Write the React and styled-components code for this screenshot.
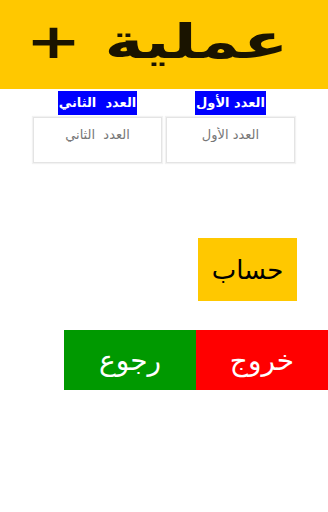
import React from 'react';
import styled, { createGlobalStyle } from 'styled-components';

const VARS = {
  yellow: '#ffc800',
  blue: '#0000ff',
  green: '#009900',
  red: '#ff0000',
  arabic: '"DejaVu Sans", "Noto Sans", sans-serif',
};

const GlobalStyle = createGlobalStyle`
  html, body {
    margin: 0;
    padding: 0;
    background: #fff;
  }
  body {
    font-family: ${VARS.arabic};
  }
`;

const Page = styled.div`
  direction: rtl;
  width: 328px;
  height: 512px;
  display: flex;
  flex-direction: column;
`;

const Header = styled.header`
  height: 89px;
  background-color: ${VARS.yellow};
  display: flex;
  align-items: center;
  justify-content: center;

  h1 {
    margin: 0 14px 8px 0;
    font-size: 48px;
    font-weight: 700;
    color: #1a1400;
    white-space: pre;
    line-height: 1;
    transform: scaleX(1.38);
  }
`;

const Fields = styled.div`
  display: flex;
  justify-content: center;
  gap: 4px;
  margin-top: 2px;
`;

const Field = styled.div`
  width: 129px;
  display: flex;
  flex-direction: column;
  align-items: center;
  gap: 2px;
`;

const Label = styled.span`
  background-color: ${VARS.blue};
  color: #fff;
  font-weight: 700;
  font-size: 13px;
  line-height: 24px;
  height: 24px;
  padding: 0 1px;
  white-space: pre;
`;

const Input = styled.input`
  box-sizing: border-box;
  width: 129px;
  height: 46px;
  border: 1px solid #e4e4e4;
  box-shadow: 0 0 1px 1px #f2f2f2;
  padding: 0 0 12px;
  text-align: center;
  font-family: ${VARS.arabic};
  font-size: 13px;
  color: #333;
  direction: rtl;

  &::placeholder {
    color: #777;
  }
`;

const ActionRow = styled.div`
  display: flex;
  justify-content: flex-start;
  padding-right: 31px;
  margin-top: 75px;
`;

const Button = styled.button`
  border: none;
  margin: 0;
  padding: 0;
  font-family: ${VARS.arabic};
  font-size: ${p => p.$size || 28}px;
  background-color: ${p => p.$bg};
  color: ${p => p.$fg || '#fff'};
  width: ${p => p.$w}px;
  height: ${p => p.$h}px;
  cursor: pointer;
`;

const NavRow = styled.div`
  display: flex;
  margin-top: 29px;
`;

export default function App() {
  return (
    <Page>
      <GlobalStyle />
      <Header>
        <h1>{'عملية +'}</h1>
      </Header>

      <Fields>
        <Field>
          <Label>العدد الأول</Label>
          <Input placeholder="العدد الأول" />
        </Field>
        <Field>
          <Label>{'العدد  الثاني'}</Label>
          <Input placeholder="العدد  الثاني" />
        </Field>
      </Fields>

      <ActionRow>
        <Button $bg={VARS.yellow} $fg="#000" $w={99} $h={63} $size={26}>حساب</Button>
      </ActionRow>

      <NavRow>
        <Button $bg={VARS.red} $w={132} $h={60}>خروج</Button>
        <Button $bg={VARS.green} $w={132} $h={60}>رجوع</Button>
      </NavRow>
    </Page>
  );
}
